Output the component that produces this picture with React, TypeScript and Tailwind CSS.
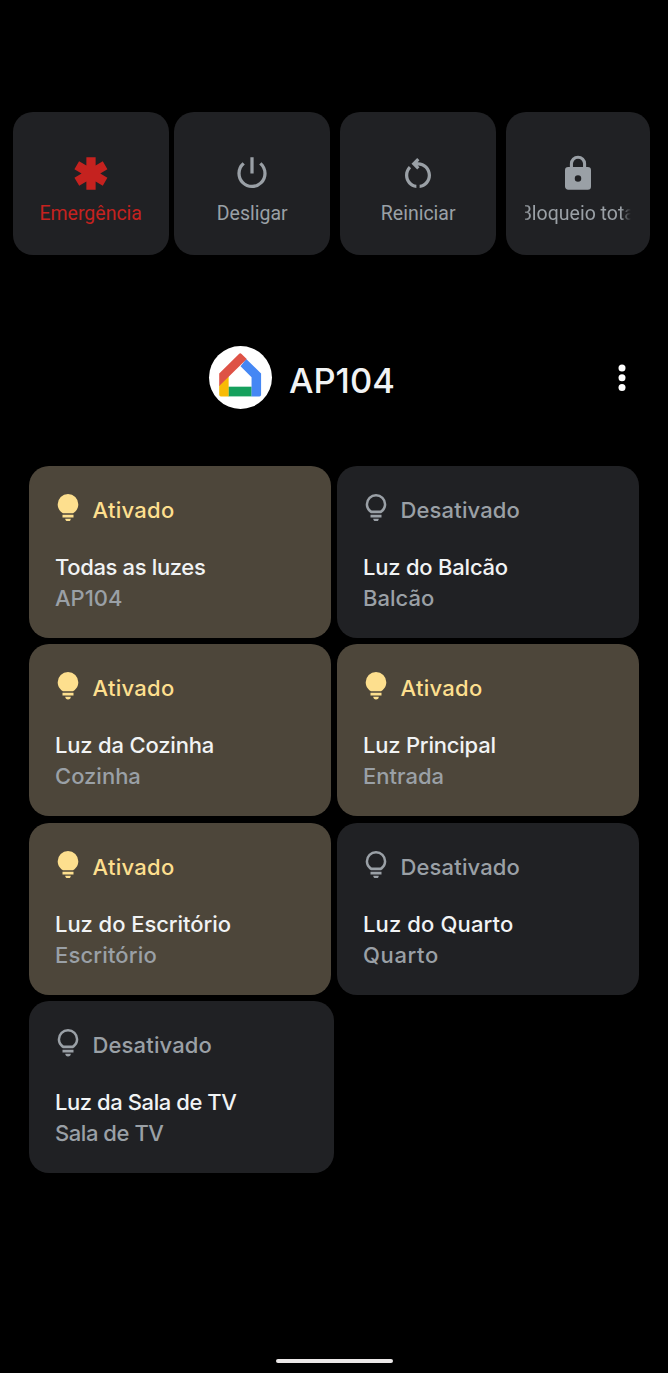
import React from 'react';

interface PowerAction {
  label: string;
  icon: React.ReactNode;
  card: string;
  text: string;
}

interface Light {
  name: string;
  room: string;
  on: boolean;
  nameSpacing: string;
  roomSpacing: string;
}

const powerActions: PowerAction[] = [
  {
    label: 'Emergência',
    card: 'w-[156px] mr-[5px] text-[#c5221f]',
    text: '',
    icon: <path d="M9.15 1.95h5.7v5.1l4.4-2.55 2.85 4.95-4.4 2.55 4.4 2.55-2.85 4.95-4.4-2.55v5.1h-5.7v-5.1l-4.4 2.55L1.8 14.55 6.2 12 1.8 9.45 4.65 4.5l4.5 2.55z" />,
  },
  {
    label: 'Desligar',
    card: 'w-[156px] mr-[10px] text-[#9aa0a6]',
    text: 'pl-px',
    icon: <path d="M13 2h-2v10h2zm4.83 3.1-1.42 1.42A6.92 6.92 0 0 1 19 11.95c0 3.87-3.13 7-7 7s-7-3.13-7-7c0-2.19 1.01-4.14 2.58-5.42L6.17 5.1A8.93 8.93 0 0 0 3 11.95a9 9 0 0 0 18 0c0-2.74-1.23-5.18-3.17-6.85z" />,
  },
  {
    label: 'Reiniciar',
    card: 'w-[156px] mr-[10px] text-[#9aa0a6]',
    text: 'pl-px',
    icon: <path d="M6 13c0-1.65.67-3.15 1.76-4.24L6.34 7.34C4.9 8.79 4 10.79 4 13c0 4.08 3.05 7.44 7 7.93v-2.02C8.17 18.43 6 15.97 6 13zm14 0c0-4.42-3.58-8-8-8-.06 0-.12.01-.18.01l1.09-1.09L11.5 2.5 8 6l3.5 3.5 1.41-1.41-1.08-1.08c.06 0 .12-.01.17-.01 3.31 0 6 2.69 6 6 0 2.97-2.17 5.43-5 5.91v2.02c3.95-.49 7-3.85 7-7.93z" />,
  },
  {
    label: 'Bloqueio total',
    card: 'w-[144px] text-[#9aa0a6]',
    text: 'w-[106px] pl-1 overflow-hidden [mask-image:linear-gradient(to_right,#000a,black_5%,black_90%,transparent)]',
    icon: <path fillRule="evenodd" d="M18 8h-1V6A5 5 0 0 0 7 6v2H6a2 2 0 0 0-2 2v10c0 1.1.9 2 2 2h12a2 2 0 0 0 2-2V10a2 2 0 0 0-2-2zM8.9 6a3.1 3.1 0 0 1 6.2 0v2H8.9zM12 17a2 2 0 1 1 0-4 2 2 0 0 1 0 4z" />,
  },
];

const lights: Light[] = [
  { name: 'Todas as luzes', room: 'AP104', on: true, nameSpacing: 'tracking-[-0.36px]', roomSpacing: '' },
  { name: 'Luz do Balcão', room: 'Balcão', on: false, nameSpacing: 'tracking-[-0.22px]', roomSpacing: '' },
  { name: 'Luz da Cozinha', room: 'Cozinha', on: true, nameSpacing: 'tracking-[-0.18px]', roomSpacing: '' },
  { name: 'Luz Principal', room: 'Entrada', on: true, nameSpacing: 'tracking-[-0.22px]', roomSpacing: '' },
  { name: 'Luz do Escritório', room: 'Escritório', on: true, nameSpacing: 'tracking-[-0.06px]', roomSpacing: 'tracking-[0.15px]' },
  { name: 'Luz do Quarto', room: 'Quarto', on: false, nameSpacing: 'tracking-[0.13px]', roomSpacing: 'tracking-[0.65px]' },
  { name: 'Luz da Sala de TV', room: 'Sala de TV', on: false, nameSpacing: 'tracking-[-0.43px]', roomSpacing: 'tracking-[-0.45px]' },
];

const Bulb: React.FC<{ on: boolean }> = ({ on }) => (
  <svg className="w-[22px] h-[27.5px] shrink-0" viewBox="4 2 16 20" fill="currentColor">
    <path d="M12 22a2 2 0 0 0 2-2h-4c0 1.1.9 2 2 2zM8 17h8v2H8z" />
    {on ? (
      <path d="M12 2a7.5 7.5 0 0 0-7.5 7.5c0 3.82 2.66 5.86 3.77 6.5h7.46c1.11-.64 3.77-2.68 3.77-6.5A7.5 7.5 0 0 0 12 2z" />
    ) : (
      <path fillRule="evenodd" d="M12 2a7.5 7.5 0 0 0-7.5 7.5c0 3.82 2.66 5.86 3.77 6.5h7.46c1.11-.64 3.77-2.68 3.77-6.5A7.5 7.5 0 0 0 12 2zm3.15 12h-6.3C7.8 13.33 6.3 11.77 6.3 9.5a5.7 5.7 0 0 1 11.4 0c0 2.27-1.5 3.83-2.55 4.5z" />
    )}
  </svg>
);

const LightCard: React.FC<{ light: Light; wide: boolean }> = ({ light, wide }) => (
  <div
    className={`h-[172px] rounded-[20px] pl-[26px] pt-7 font-medium text-[22px] ${light.on ? 'bg-[#4d463a]' : 'bg-[#202124]'} ${wide ? 'w-[305px]' : 'w-[302px]'}`}
  >
    <div className={`flex pl-0.5 gap-[13.5px] ${light.on ? 'text-[#fddf8e]' : 'text-[#9aa0a6]'}`}>
      <Bulb on={light.on} />
      <span className={`leading-8 ${light.on ? 'tracking-[0.28px]' : 'tracking-[0.15px]'}`}>{light.on ? 'Ativado' : 'Desativado'}</span>
    </div>
    <p className={`mt-[26px] leading-[30px] text-[#f1f3f4] ${light.nameSpacing}`}>{light.name}</p>
    <p className={`leading-[32px] text-[#9aa0a6] ${light.roomSpacing}`}>{light.room}</p>
  </div>
);

const HomeLogo: React.FC = () => (
  <div className="w-[62.5px] h-[62.5px] rounded-full bg-white">
    <svg className="w-full h-full" viewBox="0 0 63 63">
      <path d="M19.5 41H43v9.8H19.5z" fill="#16a05d" />
      <path d="M10.3 39.5 19.8 30v20.8H12a1.7 1.7 0 0 1-1.7-1.7z" fill="#f8bb05" />
      <path d="m37.5 13 15 14.6v21.5a1.7 1.7 0 0 1-1.7 1.7h-7.9V31.6L31.8 20.5z" fill="#4587f4" />
      <path d="M30.2 8a1.8 1.8 0 0 1 2.6 0l5.2 5.2L10.3 40.3V27.7z" fill="#de5246" />
    </svg>
  </div>
);

const App: React.FC = () => {
  return (
    <div className="flex flex-col w-[668px] h-[1373px] bg-black overflow-hidden font-['Inter','Liberation_Sans',sans-serif]">
      {/* Power menu */}
      <div className="flex mt-[111.6px] ml-[12.7px]">
        {powerActions.map(action => (
          <div key={action.label} className={`h-[143px] shrink-0 rounded-[20px] bg-[#202124] flex flex-col items-center pt-[42.4px] ${action.card}`}>
            <svg className="w-[40px] h-[39px]" viewBox="0 0 24 24" fill="currentColor">{action.icon}</svg>
            <div className={`mt-[9.5px] flex justify-center whitespace-nowrap font-['Roboto',sans-serif] text-[19.5px] leading-6 ${action.text}`}>
              <span>{action.label}</span>
            </div>
          </div>
        ))}
      </div>

      {/* Home header */}
      <div className="flex items-center mt-[91.6px] pl-[209px] pr-[41.6px]">
        <HomeLogo />
        <h1 className="ml-[17.5px] pt-[7px] text-[34.5px] leading-[44px] font-medium text-[#f1f3f4]">AP104</h1>
        <svg className="w-[8px] h-[28px] ml-auto mt-0.5" viewBox="0 0 8 28" fill="white">
          <circle cx="4" cy="4" r="3.5" />
          <circle cx="4" cy="13.8" r="3.5" />
          <circle cx="4" cy="23.6" r="3.5" />
        </svg>
      </div>

      {/* Light controls */}
      <div className="grid grid-cols-[302px_302px] gap-x-[6px] gap-y-[6.6px] mt-[57px] ml-[29px]">
        {lights.map((light, i) => (
          <LightCard key={light.name} light={light} wide={i === lights.length - 1} />
        ))}
      </div>

      {/* Gesture bar */}
      <div className="w-[117px] h-1 rounded-full bg-[#ebe8e8] mx-auto mt-auto mb-[10px]"></div>
    </div>
  );
};

export default App;
